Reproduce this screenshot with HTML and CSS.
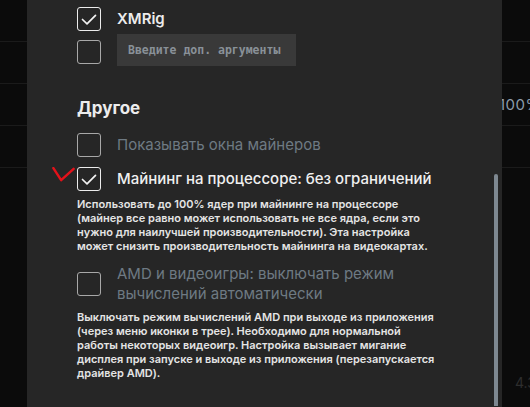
FILE: index.html
```html
<!DOCTYPE html>
<html lang="ru">
<head>
<meta charset="utf-8">
<link rel="stylesheet" href="styles.css">
</head>
<body>
<div class="backdrop">
  <div class="bg-row"></div>
  <div class="bg-row"></div>
  <div class="bg-row"><span class="bg-value">100%</span></div>
  <div class="bg-row"></div>
  <div class="bg-version">4.3</div>
</div>

<div class="panel">
  <div class="content">
    <div class="row">
      <span class="box checked"><svg viewBox="0 0 24 24"><path d="M5.5 12.5 L10 16.8 L18.5 8.3"/></svg></span>
      <span class="label strong">XMRig</span>
    </div>
    <div class="row row-input">
      <span class="box"></span>
      <input class="args" type="text" placeholder="Введите доп. аргументы">
    </div>

    <h2 class="heading">Другое</h2>

    <div class="row row-gap">
      <span class="box"></span>
      <span class="label muted">Показывать окна майнеров</span>
    </div>
    <div class="row row-gap annotated">
      <svg class="mark" viewBox="0 0 24 16"><path d="M1.2 1.2 L9.5 14 L22.8 2"/></svg>
      <span class="box checked"><svg viewBox="0 0 24 24"><path d="M5.5 12.5 L10 16.8 L18.5 8.3"/></svg></span>
      <span class="label bright">Майнинг на процессоре: без ограничений</span>
    </div>
    <p class="desc">Использовать до 100% ядер при майнинге на процессоре (майнер все равно может использовать не все ядра, если это нужно для наилучшей производительности). Эта настройка может снизить производительность майнинга на видеокартах.</p>

    <div class="row row-two">
      <span class="box"></span>
      <span class="label muted two">AMD и видеоигры: выключать режим вычислений автоматически</span>
    </div>
    <p class="desc">Выключать режим вычислений AMD при выходе из приложения (через меню иконки в трее). Необходимо для нормальной работы некоторых видеоигр. Настройка вызывает мигание дисплея при запуске и выходе из приложения (перезапускается драйвер AMD).</p>
  </div>
  <div class="scrollbar"></div>
</div>
</body>
</html>
```

FILE: styles.css
```css
* { box-sizing: border-box; }
html, body {
  margin: 0;
  padding: 0;
  width: 530px;
  height: 407px;
  overflow: hidden;
  background: #0b0b0b;
  font-family: Inter, "Noto Sans", sans-serif;
}
.backdrop {
  position: relative;
  height: 407px;
}
.bg-row {
  height: 42px;
  border-bottom: 1px solid #1b1b1b;
  display: flex;
  align-items: center;
}
.bg-value {
  margin-left: 499px;
  color: #8d9cab;
  font-size: 15px;
  letter-spacing: 0.5px;
}
.bg-version {
  position: absolute;
  left: 515px;
  top: 374px;
  color: #2e2e2e;
  font-size: 14px;
}
.panel {
  position: absolute;
  left: 27px;
  top: 0;
  width: 475px;
  height: 407px;
  background: #262626;
  overflow: hidden;
}
.content {
  padding: 7px 0 0 50px;
  width: 420px;
}
.row {
  display: flex;
  align-items: center;
  gap: 16px;
  position: relative;
}
.box {
  flex: none;
  width: 24px;
  height: 24px;
  border: 1.5px solid #a8a8a8;
  border-radius: 3px;
  display: flex;
  align-items: center;
  justify-content: center;
}
.box.checked { border-color: #ececec; }
.box svg {
  width: 24px;
  height: 24px;
  margin: -1.5px;
  fill: none;
  stroke: #f2f2f2;
  stroke-width: 1.7;
  stroke-linecap: round;
  stroke-linejoin: round;
}
.label {
  font-size: 15px;
  line-height: 20px;
}
.strong {
  color: #ececec;
  font-weight: 600;
}
.muted { color: #6e7a83; }
.bright {
  color: #f0f0f0;
  font-weight: 500;
}
.row-input {
  margin-top: 3px;
  align-items: flex-start;
}
.row-input .box { margin-top: 6px; }
.args {
  width: 179px;
  height: 32px;
  border: 0;
  outline: none;
  background: #393939;
  padding: 0 11px;
  font-family: "DejaVu Sans Mono", monospace;
  font-size: 11.5px;
  font-weight: bold;
  color: #ddd;
}
.args::placeholder { color: #899198; }
.heading {
  margin: 31px 0 0;
  font-size: 17px;
  line-height: 22px;
  font-weight: 700;
  color: #ededed;
}
.row-gap { margin-top: 14px; }
.annotated { margin-top: 10px; }
.mark {
  position: absolute;
  left: -25px;
  top: 0;
  width: 23px;
  height: 15px;
  fill: none;
  stroke: #e3121a;
  stroke-width: 2.6;
  stroke-linecap: round;
  stroke-linejoin: round;
}
.desc {
  margin: 6px 0 0;
  width: 365px;
  font-size: 11px;
  line-height: 14px;
  font-weight: 600;
  color: #e4e4e4;
}
.row-two { margin-top: 11px; }
.two { width: 300px; }
.scrollbar {
  position: absolute;
  left: 467px;
  top: 174px;
  width: 4px;
  height: 232px;
  border-radius: 2px 2px 0 0;
  background: #7e8891;
}
```
